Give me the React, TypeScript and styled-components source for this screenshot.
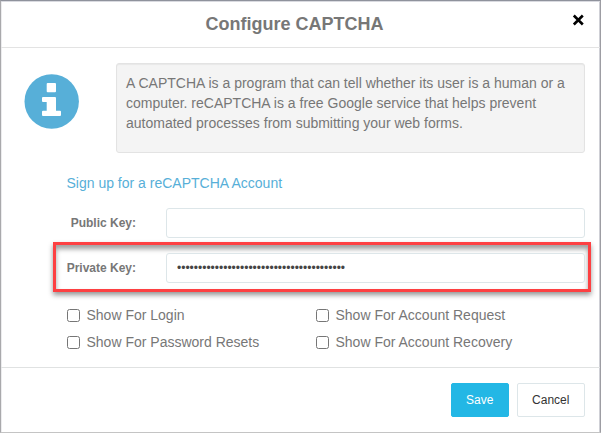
import React from "react";
import styled, { createGlobalStyle } from "styled-components";

const GlobalStyle = createGlobalStyle`
  * { box-sizing: border-box; }
  body {
    margin: 0;
    background: #fff;
    color: #777;
    font-family: "Liberation Sans", Arial, sans-serif;
    font-size: 14px;
    line-height: 20px;
  }
`;

const Dialog = styled.div`
  width: 601px;
  height: 433px;
  display: flex;
  flex-direction: column;
  background: #fff;
  border: 1px solid #a9a9ac;
  border-top-color: #8f929c;
  border-bottom-color: #c4c4c4;
  border-right-color: #9d9da3;
  box-shadow: inset 0 1px 0 #d9dae0, inset 1px 0 0 #ececee, inset -1px 0 0 #cfd0d6;
`;

const Header = styled.header`
  height: 47px;
  display: grid;
  grid-template-columns: 32px 1fr 32px;
  align-items: start;
  padding: 12px 6px 0;
  border-bottom: 1px solid #e3e3e3;
`;

const Title = styled.h1`
  grid-column: 2;
  margin: 0 12px 0 0;
  text-align: center;
  font-size: 18px;
  line-height: 22px;
  font-weight: bold;
`;

const CloseButton = styled.button`
  width: 12px;
  height: 12px;
  margin: 1px 0 0 10px;
  padding: 0;
  border: 0;
  background: none;
  svg { display: block; }
`;

const Body = styled.main`
  height: 320px;
  padding: 15px 15px 0 23px;
  border-bottom: 1px solid #e0e2e2;
`;

const Intro = styled.section`
  display: grid;
  grid-template-columns: 92px 468.5px;
`;

const InfoIcon = styled.svg`
  width: 55px;
  height: 55px;
  margin-top: 11px;
  fill: #57afd8;
`;

const Well = styled.p`
  height: 90px;
  margin: 0;
  padding: 9px 10px 0 9px;
  white-space: pre;
  background: #f4f4f4;
  border: 1px solid #e3e3e3;
  border-radius: 3px;
  box-shadow: inset 0 1px 1px rgba(0, 0, 0, 0.05);
`;

const SignupLink = styled.a`
  display: block;
  width: max-content;
  margin: 20px 0 0 42.5px;
  color: #57afd8;
  text-decoration: none;
`;

const Field = styled.label`
  height: 30px;
  display: grid;
  grid-template-columns: 112px 418.5px;
  column-gap: 30px;
  align-items: center;
  font-size: 12px;
  font-weight: bold;
`;

const FieldLabel = styled.span`
  text-align: right;
`;

const TextInput = styled.input`
  width: 100%;
  height: 30px;
  padding: 0 10px;
  border: 1px solid #dde6e9;
  border-radius: 3px;
  background: #fff;
  color: #444;
  font: 12px "Liberation Sans", Arial, sans-serif;
  outline: none;
`;

const Fields = styled.div`
  margin-top: 15px;
`;

const Highlight = styled.div`
  width: 538px;
  height: 50px;
  margin: 4px 0 0 29px;
  padding: 8px 0 0;
  border: 3px solid #fd4042;
  box-shadow: 0 3px 5px rgba(0, 0, 0, 0.42), inset 0 4px 5px rgba(0, 0, 0, 0.38);
  ${Field} { margin-left: -32px; }
`;

const Options = styled.div`
  display: grid;
  grid-template-columns: 249px 1fr;
  row-gap: 7px;
  margin: 13px 0 0 42.5px;
`;

const Option = styled.label`
  display: flex;
  align-items: center;
  gap: 7px;
  white-space: nowrap;
  input {
    width: 13px;
    height: 13px;
    margin: 1px 0 0;
  }
`;

const Footer = styled.footer`
  flex: 1;
  display: flex;
  justify-content: flex-end;
  align-items: flex-start;
  gap: 8.5px;
  padding: 15px 15.5px 0;
`;

const Button = styled.button<{ $primary?: boolean; $width: number }>`
  width: ${({ $width }) => $width}px;
  height: 34px;
  padding: 0;
  border: 1px solid ${({ $primary }) => ($primary ? "#23b7e5" : "#dde6e9")};
  border-radius: 2px;
  background: ${({ $primary }) => ($primary ? "#23b7e5" : "#fff")};
  color: ${({ $primary }) => ($primary ? "#fff" : "#333")};
  font: 12px "Liberation Sans", Arial, sans-serif;
`;

const options = [
  "Show For Login",
  "Show For Account Request",
  "Show For Password Resets",
  "Show For Account Recovery",
];

export default function App() {
  return (
    <>
      <GlobalStyle />
      <Dialog role="dialog" aria-label="Configure CAPTCHA">
        <Header>
          <Title>Configure CAPTCHA</Title>
          <CloseButton aria-label="Close">
            <svg width="12" height="12" viewBox="0 0 12 12">
              <path d="M1.8 1.5 10.8 10.5M10.8 1.5 1.8 10.5" stroke="#000" strokeWidth="2.6" />
            </svg>
          </CloseButton>
        </Header>
        <Body>
          <Intro>
            <InfoIcon viewBox="0 0 55 55" aria-hidden="true">
              <circle cx="27.7" cy="27.5" r="27.2" />
              <g fill="#fff">
                <rect x="22.7" y="9" width="9.3" height="9.2" rx="1" />
                <path d="M19 23h12q1 0 1 1v12.8h4q1 0 1 1V41q0 1-1 1H19q-1 0-1-1v-3.2q0-1 1-1h3.7v-8.9H19q-1 0-1-1V24q0-1 1-1z" />
              </g>
            </InfoIcon>
            <Well>
              {"A CAPTCHA is a program that can tell whether its user is a human or a\ncomputer. reCAPTCHA is a free Google service that helps prevent\nautomated processes from submitting your web forms."}
            </Well>
          </Intro>
          <SignupLink href="#">Sign up for a reCAPTCHA Account</SignupLink>
          <Fields>
            <Field>
              <FieldLabel>Public Key:</FieldLabel>
              <TextInput type="text" />
            </Field>
            <Highlight>
              <Field>
                <FieldLabel>Private Key:</FieldLabel>
                <TextInput type="password" defaultValue={"x".repeat(40)} />
              </Field>
            </Highlight>
          </Fields>
          <Options>
            {options.map((text) => (
              <Option key={text}>
                <input type="checkbox" />
                {text}
              </Option>
            ))}
          </Options>
        </Body>
        <Footer>
          <Button $primary $width={57.5}>Save</Button>
          <Button $width={67.5}>Cancel</Button>
        </Footer>
      </Dialog>
    </>
  );
}
